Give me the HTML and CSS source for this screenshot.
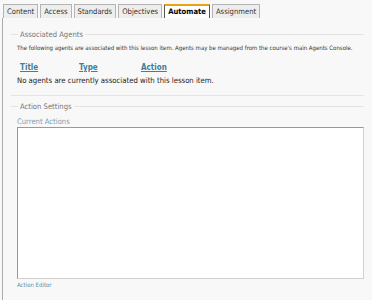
FILE: index.html
```html
<!DOCTYPE html>
<html lang="en">
<head>
    <meta charset="UTF-8">
    <title>Automate</title>
    <link rel="stylesheet" href="styles.css">
</head>
<body>
    <div class="tabs">
        <span class="tab">Content</span>
        <span class="tab">Access</span>
        <span class="tab">Standards</span>
        <span class="tab">Objectives</span>
        <span class="tab active">Automate</span>
        <span class="tab">Assignment</span>
    </div>
    <div class="panel">
        <fieldset class="group agents">
            <legend>Associated Agents</legend>
            <p class="note">The following agents are associated with this lesson item. Agents may be managed from the course's main Agents Console.</p>
            <div class="cols">
                <a href="#" class="col-title">Title</a>
                <a href="#" class="col-type">Type</a>
                <a href="#" class="col-action">Action</a>
            </div>
            <p class="empty">No agents are currently associated with this lesson item.</p>
        </fieldset>
        <fieldset class="group settings">
            <legend>Action Settings</legend>
            <div class="label">Current Actions</div>
            <div class="actions-box"></div>
            <div class="editor">Action Editor</div>
        </fieldset>
    </div>
</body>
</html>
```

FILE: styles.css
```css
body {
    margin: 0;
    background-color: #f8f8f8;
    font-family: "DejaVu Sans Condensed", "DejaVu Sans", sans-serif;
    color: #222;
}

.tabs {
    display: flex;
    gap: 2px;
    padding: 4px 0 0 3px;
    height: 14px;
}

.tab {
    font-size: 7.6px;
    line-height: 13px;
    padding: 0 3px;
    border: 1px solid #b4b4b4;
    border-bottom: none;
    background-color: #eeeeee;
    color: #333;
}

.tab.active {
    background-color: #fff;
    font-weight: bold;
    color: #000;
    border-color: #555;
    border-top: 2px solid #e8a317;
    line-height: 12px;
}

.panel {
    border-left: 1px solid #aaa;
    margin-left: 2px;
    height: 275px;
    padding: 12px 8px 0 8px;
}

.group {
    border: none;
    border-top: 1px solid #e4e4e4;
    margin: 0;
    padding: 0 0 0 6px;
}

.group legend {
    font-size: 7.6px;
    color: #777;
    padding: 0 2px;
    margin-left: 1px;
}

.agents {
    border-bottom: 1px solid #e4e4e4;
    padding-bottom: 10px;
}

.note {
    font-size: 6px;
    margin: 5px 0 0 0;
    color: #333;
}

.cols {
    display: flex;
    margin: 12px 0 0 3px;
    font-size: 8px;
    font-weight: bold;
}

.cols a {
    color: #3f7f99;
}

.col-title {
    width: 59px;
}

.col-type {
    width: 62px;
}

.empty {
    font-size: 7.7px;
    margin: 4px 0 0 0;
    color: #222;
}

.settings {
    margin-top: 6px;
}

.label {
    font-size: 7.6px;
    color: #7a9fb5;
    margin-top: 6px;
}

.actions-box {
    height: 150px;
    margin-top: 1px;
    background-color: #fff;
    border: 1px solid #d0d0d0;
    border-top-color: #999;
    border-left-color: #999;
}

.editor {
    font-size: 6px;
    color: #5a8fa8;
    margin-top: 2px;
}
```
